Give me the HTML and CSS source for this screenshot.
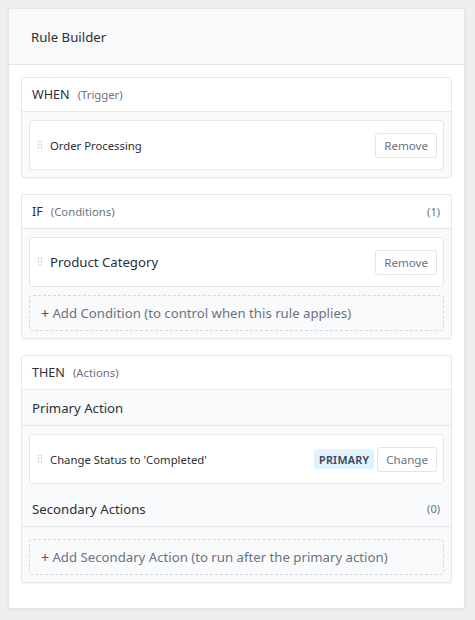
FILE: index.html
```html
<!DOCTYPE html>
<html>
<head>
<meta charset="utf-8">
<link rel="stylesheet" href="styles.css">
</head>
<body>
<div class="card">
  <div class="card-header">Rule Builder</div>
  <div class="card-body">
    <div class="section">
      <div class="section-head"><span class="kw">WHEN</span><span class="sub">(Trigger)</span></div>
      <div class="section-body">
        <div class="item">
          <span class="handle"></span>
          <span class="item-label small">Order Processing</span>
          <button class="btn">Remove</button>
        </div>
      </div>
    </div>

    <div class="section">
      <div class="section-head"><span class="kw">IF</span><span class="sub">(Conditions)</span><span class="count">(1)</span></div>
      <div class="section-body">
        <div class="item">
          <span class="handle"></span>
          <span class="item-label big">Product Category</span>
          <button class="btn">Remove</button>
        </div>
        <div class="add"><span class="plus">+</span> Add Condition (to control when this rule applies)</div>
      </div>
    </div>

    <div class="section">
      <div class="section-head"><span class="kw">THEN</span><span class="sub">(Actions)</span></div>
      <div class="then-body">
        <div class="subhead">Primary Action</div>
        <div class="pad">
          <div class="item">
            <span class="handle"></span>
            <span class="item-label small">Change Status to 'Completed'</span>
            <span class="badge">PRIMARY</span>
            <button class="btn">Change</button>
          </div>
        </div>
        <div class="subhead"><span>Secondary Actions</span><span class="count">(0)</span></div>
        <div class="pad pad-add">
          <div class="add"><span class="plus">+</span> Add Secondary Action (to run after the primary action)</div>
        </div>
      </div>
    </div>
  </div>
</div>
</body>
</html>
```

FILE: styles.css
```css
html, body {
  margin: 0;
  padding: 0;
  background: #efefef;
}
body {
  padding: 8px 10px 10px 8px;
  font-family: "Noto Sans", "Open Sans", sans-serif;
  color: #2b2f36;
}
.card {
  background: #fff;
  border: 1px solid #e6e6e6;
  box-shadow: 0 1px 3px rgba(0,0,0,0.08);
  border-radius: 2px;
}
.card-header {
  height: 56px;
  box-sizing: border-box;
  display: flex;
  align-items: center;
  padding: 0 22px;
  background: #f8f9fb;
  border-bottom: 1px solid #e2e6eb;
  font-size: 13.2px;
  color: #2b2f36;
}
.card-body {
  padding: 12px 12px 25px 12px;
  display: flex;
  flex-direction: column;
  gap: 16px;
}
.section {
  border: 1px solid #e5e7eb;
  border-radius: 3px;
  background: #f9fafb;
  box-shadow: 0 1px 1px rgba(0,0,0,0.03);
}
.section-head {
  height: 34px;
  box-sizing: border-box;
  display: flex;
  align-items: center;
  padding: 0 11px 0 10px;
  background: #fff;
  border-bottom: 1px solid #e5e7eb;
  border-radius: 3px 3px 0 0;
}
.kw {
  font-size: 12.6px;
  color: #2b2f36;
}
.sub {
  font-size: 11.3px;
  color: #6b7280;
  margin-left: 8px;
}
.count {
  margin-left: auto;
  font-size: 11px;
  color: #6b7280;
}
.section-body {
  padding: 8px 7px 7px 7px;
  display: flex;
  flex-direction: column;
  gap: 8px;
}
.item {
  height: 50px;
  box-sizing: border-box;
  background: #fff;
  border: 1px solid #e5e7eb;
  border-radius: 3px;
  display: flex;
  align-items: center;
  padding: 0 6px 0 7px;
}
.handle {
  width: 5px;
  height: 10px;
  margin-right: 8px;
  background-image: radial-gradient(circle, #d4d8dd 0.9px, transparent 1.1px);
  background-size: 3px 3px;
  background-position: 0 0;
}
.item-label {
  flex: 1;
}
.item-label.small {
  font-size: 11.3px;
}
.item-label.big {
  font-size: 13.2px;
}
.btn {
  font-family: inherit;
  font-size: 11.6px;
  color: #6b7280;
  background: #fff;
  border: 1px solid #e2e5e9;
  border-radius: 3px;
  height: 25px;
  padding: 0 8px;
}
.badge {
  font-size: 10.8px;
  font-weight: 600;
  color: #374151;
  background: #e0f2fe;
  border-radius: 3px;
  height: 20px;
  width: 60px;
  display: flex;
  align-items: center;
  justify-content: center;
  margin-right: 3px;
  letter-spacing: 0.3px;
}
.add {
  height: 36px;
  box-sizing: border-box;
  border: 1px dashed #d5d9de;
  border-radius: 4px;
  display: flex;
  align-items: center;
  padding: 0 11px;
  font-size: 13.2px;
  color: #6b7280;
  white-space: pre;
}
.plus {
  font-size: 14px;
  color: #4b5563;
}
.then-body {
  display: flex;
  flex-direction: column;
}
.subhead {
  height: 36px;
  box-sizing: border-box;
  display: flex;
  align-items: center;
  padding: 0 11px 0 10px;
  border-bottom: 1px solid #e5e7eb;
  font-size: 13.2px;
  color: #2b2f36;
}
.pad {
  padding: 8px 7px 7px 7px;
}
.pad.pad-add {
  padding: 12px 7px 7px 7px;
}
```
